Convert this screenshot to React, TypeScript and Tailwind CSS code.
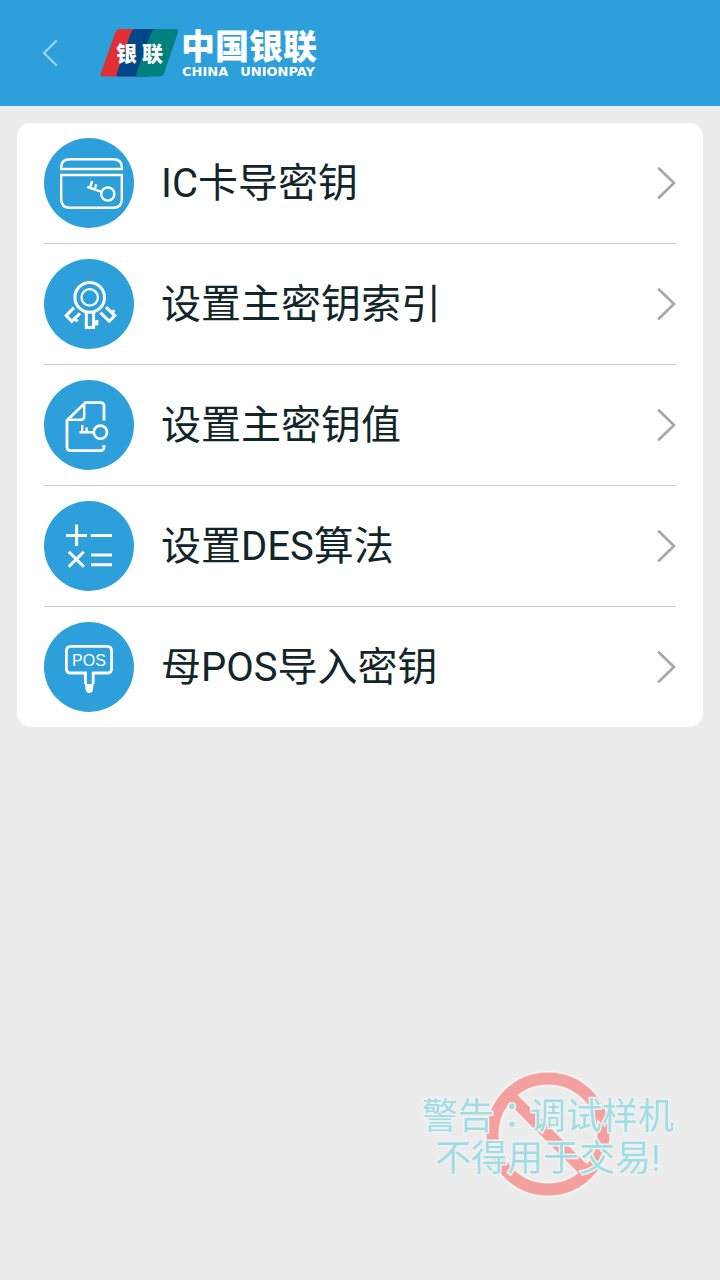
import type { ReactNode } from "react";

function CardKeyIcon() {
  return (
    <g strokeWidth="2.4">
      <path d="M17.2 31V29Q17.2 21.2 26 21.2H69Q77.8 21.2 77.8 29V31Z" />
      <path d="M17.2 37H77.8V61Q77.8 69.8 69 69.8H26Q17.2 69.8 17.2 61Z" />
      <circle cx="63.8" cy="56" r="6.6" />
      <path d="M57.6 53.8L43.2 48.8M46 49.6L48.2 43M50.8 51L52.2 46.4" />
    </g>
  );
}

function KeyRingIcon() {
  return (
    <g strokeWidth="3">
      <circle cx="45.7" cy="38.4" r="14.8" />
      <circle cx="45.7" cy="38.4" r="8.2" strokeWidth="2.2" />
      <path d="M42.3 53V68.4H49.6V53M49.6 63.8H53.2" />
      <path d="M52.8 61V66.4" strokeWidth="3" />
      <path d="M30 48.6L22.2 56.6L27.8 62.4L36 54.4M29.5 58.5L33.6 62.4" />
      <path d="M56.4 53.6L65.2 62.2L70.8 56.6L62 48.2M67.2 54.6L70.4 51.2" />
    </g>
  );
}

function FileKeyIcon() {
  return (
    <g strokeWidth="2.8">
      <path d="M60 40.5V26Q60 22.6 56.6 22.6H41.4L23 40.4V67Q23 70.6 26.6 70.6H56.4Q60 70.6 60 67V65" />
      <path d="M40.2 23V36.6Q40.2 39.8 37 39.8H24" strokeWidth="2.4" />
      <circle cx="56.4" cy="52.2" r="6.6" strokeWidth="2.6" />
      <path d="M50 52.2H35.4M38.2 52V45M42.6 52V47.4" strokeWidth="2.4" />
    </g>
  );
}

function MathIcon() {
  return (
    <g strokeWidth="3">
      <path d="M22 34.4H43M32.6 23.4V45M46.8 34.4H68" />
      <path d="M24.8 50.8L39.8 65.8M39.8 50.8L24.8 65.8" />
      <path d="M47 54H68M47 63.8H68" />
    </g>
  );
}

function PosIcon() {
  return (
    <g strokeWidth="2.8">
      <path d="M41.4 62V51H27Q22.4 51 22.4 46.4V29Q22.4 24.4 27 24.4H63Q67.6 24.4 67.6 29V46.4Q67.6 51 63 51H49.2V62" />
      <path d="M41 62H49.6L48.8 68.4Q48.2 71 45.3 71Q42.4 71 41.8 68.4Z" fill="#fff" stroke="none" />
      <text
        x="45"
        y="44"
        textAnchor="middle"
        fill="#fff"
        stroke="none"
        className="font-['Liberation_Sans',sans-serif] text-[16px]"
      >
        POS
      </text>
    </g>
  );
}

const items: { label: string; icon: ReactNode }[] = [
  { label: "IC卡导密钥", icon: <CardKeyIcon /> },
  { label: "设置主密钥索引", icon: <KeyRingIcon /> },
  { label: "设置主密钥值", icon: <FileKeyIcon /> },
  { label: "设置DES算法", icon: <MathIcon /> },
  { label: "母POS导入密钥", icon: <PosIcon /> },
];

function Emblem() {
  return (
    <svg width="80" height="48" viewBox="0 0 80 48" aria-hidden="true">
      <path d="M20 0H50L36 47.5H3Q-0.4 47.5 0.8 44.2L15.4 3.4Q16.6 0 20 0Z" fill="#e02f35" />
      <path d="M36 0H66L50 47.5H18.6Q15.8 47.5 16.8 44.2L31 3.4Q32.4 0 36 0Z" fill="#00478a" />
      <path d="M56.6 0H75Q79 0 77.8 3.8L64.2 44Q63 47.5 59.4 47.5H39Q35.4 47.5 36.4 44L51.4 3.4Q52.8 0 56.6 0Z" fill="#00807f" />
      <g fill="#fff" className="font-['Noto_Sans_CJK_SC',sans-serif] text-[21px] font-black">
        <text x="16" y="32">银</text>
        <text x="42" y="32">联</text>
      </g>
    </svg>
  );
}

function Header() {
  return (
    <header className="flex h-[106px] items-center bg-[#2d9fda] pl-9">
      <button type="button" aria-label="返回" className="flex h-12 w-16 items-center">
        <svg width="28" height="28" viewBox="0 0 28 28" fill="none" stroke="#96d2f2" strokeWidth="2.2">
          <path d="M20.8 1.4L8 14L20.8 26.6" />
        </svg>
      </button>
      <div className="flex items-center gap-px">
        <Emblem />
        <div className="flex flex-col gap-[3px] text-white">
          <span className="font-['Noto_Sans_CJK_SC',sans-serif] text-[34px] leading-[34px] font-black">
            中国银联
          </span>
          <span className="flex gap-3 pl-px font-['DejaVu_Sans',sans-serif] text-[13px] leading-[14px] font-bold">
            <span>CHINA</span>
            <span>UNIONPAY</span>
          </span>
        </div>
      </div>
    </header>
  );
}

function Warning() {
  return (
    <aside className="pointer-events-none fixed right-[46px] bottom-[82px] grid place-items-center">
      <svg
        className="col-start-1 row-start-1"
        width="128"
        height="128"
        viewBox="0 0 128 128"
        fill="none"
        aria-hidden="true"
      >
        <g stroke="#f2f2f2" strokeWidth="16">
          <circle cx="64" cy="64" r="55.5" />
          <path d="M26 26L102 102" />
        </g>
        <g stroke="#f4a09f" strokeWidth="12">
          <circle cx="64" cy="64" r="55.5" />
          <path d="M26 26L102 102" />
        </g>
      </svg>
      <p className="col-start-1 row-start-1 pt-1 text-center font-['Roboto','Noto_Sans_CJK_SC',sans-serif] text-[36px] leading-[42px] text-[#9fdde4] [-webkit-text-stroke:3px_#f0f0f0] [paint-order:stroke]">
        警告
        <span lang="zh-TW" className="font-['Noto_Sans_CJK_TC',sans-serif]">
          ：
        </span>
        调试样机
        <br />
        不得用于交易!
      </p>
    </aside>
  );
}

export default function App() {
  return (
    <div lang="zh-CN" className="min-h-screen bg-[#ececec]">
      <Header />
      <main className="p-[17px]">
        <ul className="rounded-[14px] bg-white px-[27px]">
          {items.map((item) => (
            <li key={item.label} className="border-b border-[#c8c8c8] last:border-b-0">
              <button type="button" className="flex h-[120px] w-full items-center text-left">
                <svg width="90" height="90" viewBox="0 0 90 90" fill="none" stroke="#fff" aria-hidden="true">
                  <circle cx="45" cy="45" r="45" fill="#2d9fda" stroke="none" />
                  {item.icon}
                </svg>
                <span className="ml-[27px] flex-1 pt-[2px] font-['Roboto','Noto_Sans_CJK_SC',sans-serif] text-[40px] leading-[48px] text-[#12262a]">
                  {item.label}
                </span>
                <svg width="20" height="34" viewBox="0 0 20 34" fill="none" stroke="#a9a9a9" strokeWidth="2.8" strokeLinecap="round" aria-hidden="true">
                  <path d="M3 2.4L18 17L3 31.6" />
                </svg>
              </button>
            </li>
          ))}
        </ul>
      </main>
      <Warning />
    </div>
  );
}
